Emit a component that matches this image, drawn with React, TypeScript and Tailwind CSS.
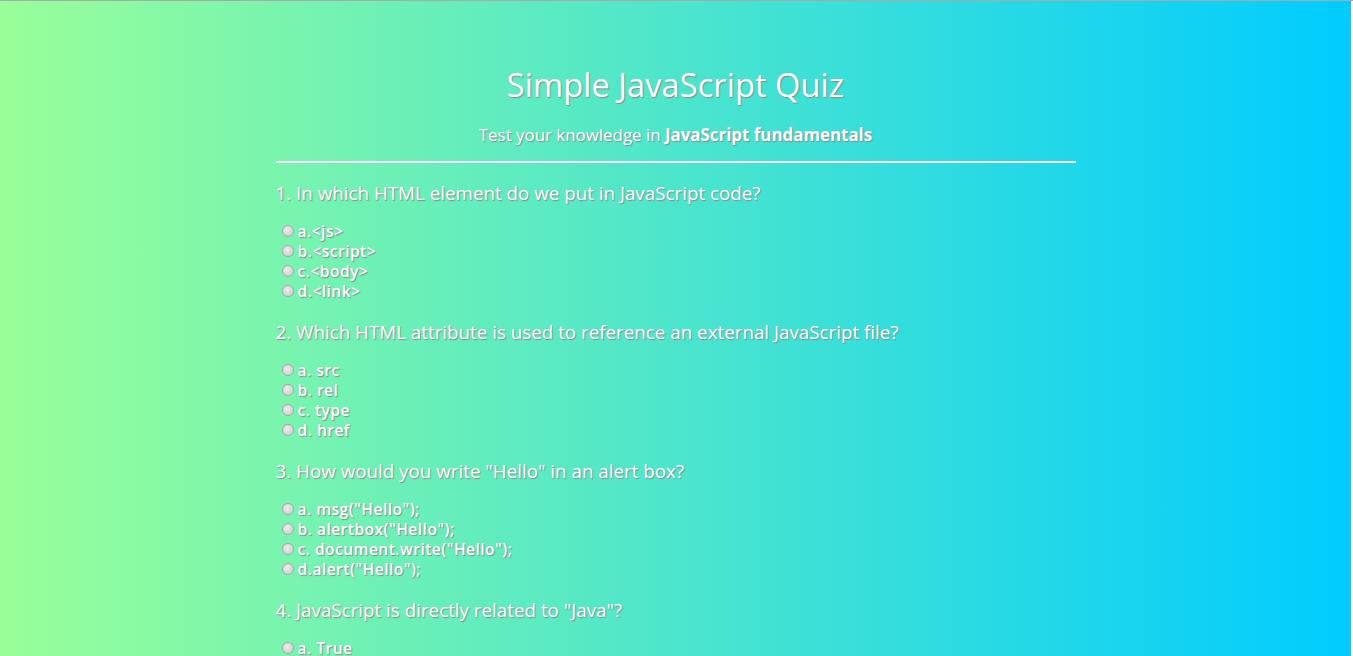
const questions = [
  {
    q: '1. In which HTML element do we put in JavaScript code?',
    options: ['a.<js>', 'b.<script>', 'c.<body>', 'd.<link>'],
  },
  {
    q: '2. Which HTML attribute is used to reference an external JavaScript file?',
    options: ['a. src', 'b. rel', 'c. type', 'd. href'],
  },
  {
    q: '3. How would you write "Hello" in an alert box?',
    options: ['a. msg("Hello");', 'b. alertbox("Hello");', 'c. document.write("Hello");', 'd.alert("Hello");'],
  },
  {
    q: '4. JavaScript is directly related to "Java"?',
    options: ['a. True', 'b. False'],
  },
];

export default function App() {
  return (
    <div className="min-h-screen bg-white">
      <div className="h-px bg-[#a9a9a9]" />
      <div className="mr-[2px] min-h-[655px] bg-[linear-gradient(to_right,#99ff99,#00ccff)] font-['Open_Sans',sans-serif] text-white [text-shadow:1px_1px_1px_#8a8a8a]">
        <div className="mx-auto w-[800px] pt-[64px] pb-10">
          <h1 className="text-center text-[32.7px] leading-[40px] font-normal">Simple JavaScript Quiz</h1>
          <p className="mt-[20px] text-center text-[16.9px] leading-[20px] font-normal">
            Test your knowledge in <strong className="font-bold">JavaScript fundamentals</strong>
          </p>
          <hr className="mt-[16px] border-0 h-[2px] bg-white" />
          <form className="pt-[18px]">
            {questions.map((item, qi) => (
              <div key={qi} className="mb-[19px]">
                <h3 className="text-[18.8px] leading-[24px] font-normal">{item.q}</h3>
                <ul className="mt-[16px]">
                  {item.options.map((opt, oi) => (
                    <li key={oi} className="flex items-center h-[20px] text-[15.6px] leading-[20px] font-semibold tracking-[0.45px]">
                      <input
                        type="radio"
                        name={`q${qi}`}
                        className="appearance-none ml-[6px] mr-[4px] w-[12px] h-[12px] rounded-full border border-[#a8a8a8] bg-[radial-gradient(circle_at_40%_35%,#ececec,#c9c9c9)] shrink-0"
                      />
                      <span>{opt}</span>
                    </li>
                  ))}
                </ul>
              </div>
            ))}
          </form>
        </div>
      </div>
    </div>
  );
}
